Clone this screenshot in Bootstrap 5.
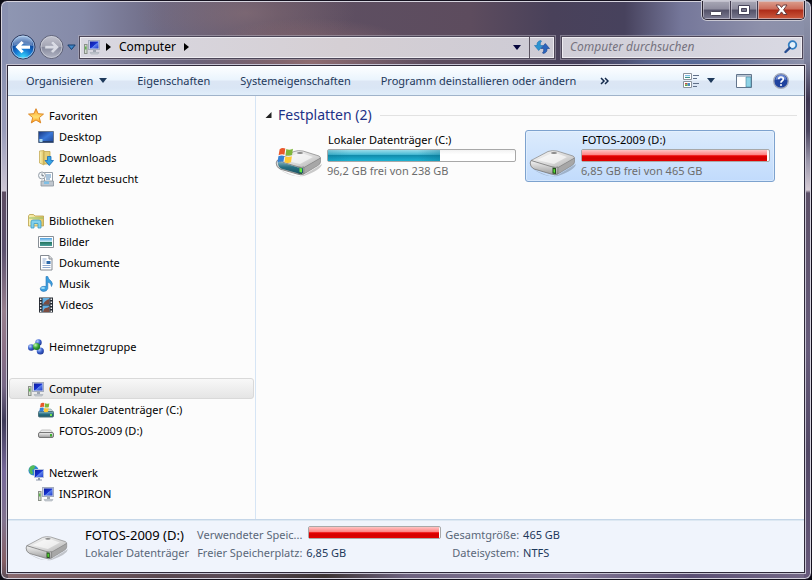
<!DOCTYPE html>
<html lang="de">
<head>
<meta charset="utf-8">
<meta name="viewport" content="width=device-width, initial-scale=1">
<title>Computer</title>
<link href="https://cdn.jsdelivr.net/npm/bootstrap@5.3.0/dist/css/bootstrap.min.css" rel="stylesheet">
<style>
  body { font-family: "Noto Sans", "Open Sans", sans-serif; font-size: 11px; line-height: 18px; color: #000; background: #0b0b14; }
  button, input { font: inherit; color: inherit; }
  .plain { border: 0; background: none; padding: 0; }
  .near { margin-left: 6px; }
  svg { display: block; flex: none; }
  .glass { border: 1px solid #15121f; border-radius: 7px; padding: 0 6px 6px; box-shadow: inset 0 0 0 1px #d5d3de;
    background:
      linear-gradient(180deg, #8990b0 0, #8990b0 60px, #9a9dbb 130px, #cdc6d4 190px, #5c4c62 191px, #5d526f 250px, #98808f 310px, #8b7187 350px, #776887 385px, #3e3a58 420px, #77699a 470px, #82748f 520px, #865f65 560px, #5b4d58) left / 7px 100% no-repeat,
      linear-gradient(180deg, #9197ad 0, #7c809b 60px, #3d3550 98px, #4b4560 130px, #9a96aa 160px, #d5cbd5 189px, #5c5068 192px, #665b7b 350px, #524866 450px, #67597c) right / 7px 100% no-repeat,
      linear-gradient(90deg, #8b6b70, #5a4850 20%, #5b4c58 28%, #3c3333 40%, #6e6380 50%, #857a98 70%, #5b4f74 85%, #756a88) bottom / 100% 8px no-repeat,
      radial-gradient(ellipse 120px 45px at 310px 62px, #a77b78aa 0, #a77b7800 100%),
      radial-gradient(ellipse 110px 40px at 245px 12px, #8b717799 0, #8b717700 100%),
      radial-gradient(ellipse 110px 34px at 690px 62px, #566997 0, #56699700 100%),
      linear-gradient(90deg, #8f97b3 0, #858aa8 10%, #6d6983 20%, #5e5063 34%, #5d4c5e 58%, #49415a 68%, #47425d 77%, #75779a 84%, #8e91ab 94%, #8a90a9);
  }
  .title-row { height: 34px; }
  .caption-group { height: 19px; width: 103px; border: 1px solid #28222f; border-top: 0; border-radius: 0 0 5px 5px; box-shadow: 0 0 0 1px #c9c8d3; overflow: hidden; background: linear-gradient(#a8a7b5 0, #8e8c9e 45%, #535168 50%, #7c7b92); }
  .caption-group button { border-right: 1px solid #403a4d; box-shadow: inset 0 0 0 1px #d3d1dc99; }
  .caption-group .close-btn { flex: 0 0 46px; border: 0; background: linear-gradient(#dca08f 0, #cc6c5a 45%, #ad2b18 50%, #cc5b3f); }
  .nav-row { height: 24px; padding: 0 2px 0 3px; }
  .orbs { width: 69px; gap: 3px; }
  .glass-field { height: 23px; border: 1px solid #4c4658; box-shadow: inset 0 0 0 1px #eeecf1, 0 0 0 1px #b3aebc88; background: linear-gradient(90deg, #d9d8e1, #d5cfd4 55%, #cdcbd5); }
  .refresh { width: 25px; height: 21px; border-left: 1px solid #5a5360; }
  .place { font-size: 12px; }
  .search-field { flex: 0 0 242px; margin-left: 6px; background: linear-gradient(90deg, #d0ced7, #d9d9e3); }
  .search-field input { background: transparent; border: 0; outline: 0; padding: 0 0 0 8px; min-width: 0; font-size: 12px; font-style: italic; }
  .search-field input::placeholder { color: #75727e; opacity: 1; }
  .client { border: 1px solid #2e2939; box-shadow: 0 0 0 1px #c5c2d1; background: #fcfcfc; margin-top: 6px; }
  .command-bar { height: 30px; padding: 0 15px 0 18px; border-bottom: 1px solid #a0b3ca; color: #1e395b; background: linear-gradient(#fdfeff 0, #eaf4fd 48%, #dce6f4 52%, #dae6f5 75%, #e1eefa); }
  .commands { gap: 30px; }
  .tools { gap: 21px; }
  .side { width: 248px; border-right: 1px solid #d6e5f5; padding: 9px 1px 0; }
  .tree-row { height: 21px; gap: 5px; padding-left: 18px; color: #000; text-decoration: none; white-space: nowrap; border: 1px solid transparent; border-radius: 3px; }
  .tree-row.sub { padding-left: 28px; }
  .tree-row.current { border-color: #d9d9d9; background: linear-gradient(#f8f8f8, #e5e5e5); }
  .tree-group { margin-bottom: 21px; }
  .files { padding: 9px 7px 0 9px; }
  .files h2 { font-size: 14px; line-height: 20px; color: #1e3287; }
  .head-line { height: 1px; background: #e2e2e2; }
  .tiles { gap: 4px; padding: 5px 0 0 6px; }
  .tile { width: 250px; height: 52px; padding: 0 4px 0 3px; gap: 4px; border: 1px solid transparent; border-radius: 3px; line-height: 16px; text-align: left; }
  .tile.chosen { border-color: #7da2ce; background: linear-gradient(#dcebfc, #c1dbfc); box-shadow: inset 0 0 0 1px #ebf4fd88; }
  .tile-name { padding: 1px 0 0 1px; }
  .muted-text { color: #6d6d6d; }
  .meter { height: 13px; border: 1px solid #a8a8a8; border-radius: 2px; background: linear-gradient(#f2f2f2, #fff 40%); }
  .tile .meter { margin: 1px 0; }
  .fill-blue { background: linear-gradient(90deg, #07698433, #19b6d400 20%, #19b6d400 80%, #07698455), linear-gradient(#9adcea 0, #4bbcd6 40%, #128cac 50%, #17a0c2 75%, #1fb3d2); }
  .fill-red { background: linear-gradient(#ffc4c4 0, #ff8080 45%, #e80000 52%, #d20000 75%, #e60000); }
  .details { border-top: 1px solid #c5d6e8; box-shadow: inset 0 1px #dde8f2; background: #f0f4fc; padding: 6px 0 10px 17px; color: #1e395b; }
  .details .cap { color: #5a6779; }
  .details .drive-name { font-size: 13px; color: #000; }
  .details .meter { width: 133px; margin: 0 0 5px 2px; }
  .facts { margin-left: 8px; white-space: nowrap; }
</style>
</head>
<body>
<svg width="0" height="0" class="position-absolute" aria-hidden="true">
  <defs>
    <linearGradient id="metal" x1="0" y1="0" x2="1" y2="1"><stop offset="0" stop-color="#fafafa"/><stop offset=".6" stop-color="#d5d5d5"/><stop offset="1" stop-color="#aaa"/></linearGradient>
    <linearGradient id="front" x1="0" y1="0" x2="0" y2="1"><stop offset="0" stop-color="#f4f4f4"/><stop offset="1" stop-color="#9b9b9b"/></linearGradient>
    <linearGradient id="screen" x1="0" y1="0" x2="1" y2="1"><stop offset="0" stop-color="#0a1c9c"/><stop offset=".5" stop-color="#1731cf"/><stop offset=".55" stop-color="#5d83ee"/><stop offset="1" stop-color="#1b38c8"/></linearGradient>
    <linearGradient id="teal" x1="0" y1="0" x2="0" y2="1"><stop offset="0" stop-color="#8db8c4"/><stop offset=".5" stop-color="#276f82"/><stop offset="1" stop-color="#1c5565"/></linearGradient>
    <radialGradient id="orb" cx=".5" cy=".95" r=".9"><stop offset="0" stop-color="#3ee0ff"/><stop offset=".4" stop-color="#1579d4"/><stop offset=".75" stop-color="#0b3f95"/><stop offset="1" stop-color="#6d9dd6"/></radialGradient>
    <linearGradient id="dim" x1="0" y1="0" x2="0" y2="1"><stop offset="0" stop-color="#c3c4cf"/><stop offset=".48" stop-color="#a4a5b3"/><stop offset=".52" stop-color="#878a9d"/><stop offset="1" stop-color="#b4b7c6"/></linearGradient>
    <linearGradient id="star" x1="0" y1="0" x2="0" y2="1"><stop offset="0" stop-color="#ff9f2b"/><stop offset=".6" stop-color="#ffe070"/><stop offset="1" stop-color="#ff9010"/></linearGradient>
    <linearGradient id="folder" x1="0" y1="0" x2="1" y2="0"><stop offset="0" stop-color="#fbf3b5"/><stop offset="1" stop-color="#dfc463"/></linearGradient>
    <linearGradient id="sky" x1="0" y1="0" x2="0" y2="1"><stop offset="0" stop-color="#4c9fe0"/><stop offset=".5" stop-color="#d6f1f5"/><stop offset=".55" stop-color="#277761"/><stop offset="1" stop-color="#4aa09d"/></linearGradient>
    <linearGradient id="desk" x1="0" y1="0" x2="1" y2="1"><stop offset="0" stop-color="#17357f"/><stop offset=".5" stop-color="#3a78d8"/><stop offset="1" stop-color="#1d4494"/></linearGradient>
    <radialGradient id="blueball" cx=".35" cy=".3" r=".8"><stop offset="0" stop-color="#b9d2ff"/><stop offset=".5" stop-color="#3c62cd"/><stop offset="1" stop-color="#172d86"/></radialGradient>
    <radialGradient id="greenball" cx=".35" cy=".3" r=".8"><stop offset="0" stop-color="#c4f7b2"/><stop offset=".5" stop-color="#39a736"/><stop offset="1" stop-color="#12611b"/></radialGradient>
    <symbol id="pc" viewBox="0 0 16 16">
      <rect x=".5" y="5.500" width="2.500" height="9" fill="#d3ddcf" stroke="#8a9188"/><path d="M1 7.500h1.500v3H1z" fill="#5eb64e"/>
      <rect x="4.500" y="1.500" width="11" height="9" fill="#ccd3e6" stroke="#a4acbd"/><rect x="6" y="2.500" width="8.500" height="7" fill="url(#screen)"/>
      <path d="M9 11h3v2H9z" fill="#9ea5b0"/><path d="M6 13.500h9l-1 1.500H7z" fill="#c9ced5" stroke="#9ba2ab" stroke-width=".5"/>
    </symbol>
    <symbol id="flag" viewBox="0 0 16 16">
      <path d="M2.500 2Q5 .3 7.800 1.500L7 7.200Q4.500 6.200 1.500 7.700z" fill="#e9582b"/><path d="M8.800 1.900Q11.500 3.300 15 1.700L14.200 7.500Q11 8.800 8 7.500z" fill="#7fb63b"/>
      <path d="M1.300 8.700Q4.200 7.300 6.900 8.400L6 14Q3.500 13 .5 14.500z" fill="#3682d5"/><path d="M7.900 8.700Q10.800 10.100 14 8.600L13.200 14.300Q10 15.600 7 14.300z" fill="#ffc933"/>
    </symbol>
    <symbol id="disk" viewBox="0 0 48 28">
      <path d="M4 20Q18 30 29 26L47 15Q46 21 29 27Q20 29 4 20z" fill="#0003"/>
      <path d="M2 11.500L19 2.500Q23 1 28 2L44 7Q46.500 8 44.500 10L29 19Q26 20.500 22 19z" fill="url(#metal)" stroke="#8f8f8f" stroke-width=".8"/>
      <path d="M2 11.500L22 17.500Q27 19 29 18V25Q26 26.500 22 25L5 20Q1 18 1.200 14z" fill="url(#front)" stroke="#777" stroke-width=".8"/>
      <path d="M29 18.500L45.500 9V13Q45.500 15 43 16.500L29 25z" fill="#a7a7a7" stroke="#7c7c7c" stroke-width=".6"/>
      <path d="M8 11L22 4.500Q25 3.500 28 4.500L38 8L25 15z" fill="#fff9"/><ellipse cx="25" cy="4" rx="3" ry="1" fill="#888"/>
      <path d="M23.500 18.500l3.500 .6v6l-3.500-.6z" fill="#234f1b"/><path d="M24.500 20l1.500.3v3.500l-1.500-.3z" fill="#57e334"/>
    </symbol>
    <symbol id="disk-small" viewBox="0 0 16 16">
      <path d="M3.500 6h9L15 9H1z" fill="#ededed" stroke="#aaa" stroke-width=".7"/><rect x=".5" y="8.500" width="15" height="5" rx="1.500" fill="url(#front)" stroke="#777"/><path d="M12 10h2v2.500h-2z" fill="#3eae31"/>
    </symbol>
  </defs>
</svg>

<div class="glass min-vh-100 d-flex flex-column">
  <header>
    <div class="title-row d-flex justify-content-end align-items-start">
      <div class="caption-group d-flex" role="group" aria-label="Fenster">
        <button class="plain flex-fill d-flex align-items-center justify-content-center" aria-label="Minimieren"><svg width="12" height="14"><rect x=".5" y="8.500" width="11" height="4" rx="1" fill="#fff" stroke="#4a4757"/></svg></button>
        <button class="plain flex-fill d-flex align-items-center justify-content-center" aria-label="Maximieren"><svg width="12" height="11"><path d="M.5.500h11v9H.5z" fill="#fff" stroke="#47445a"/><path d="M3.500 3.500h5v3h-5z" fill="#77758a" stroke="#47445a"/></svg></button>
        <button class="plain close-btn d-flex align-items-center justify-content-center" aria-label="Schließen"><svg width="13" height="12"><path d="M1 1h3.500l2 2.500L8.500 1H12L8.600 5.800l3.400 4.700H8.500l-2-2.600-2 2.600H1l3.400-4.700z" fill="#fff" stroke="#683c3f"/></svg></button>
      </div>
    </div>
    <div class="nav-row d-flex align-items-center">
      <div class="orbs d-flex align-items-center flex-shrink-0">
        <button class="plain" aria-label="Zurück"><svg width="26" height="26"><circle cx="13" cy="13" r="12" fill="url(#orb)" stroke="#333c5e"/><circle cx="13" cy="13" r="11" fill="none" stroke="#b8d2ee" stroke-opacity=".8"/><path d="M3 12a10 10 0 0 1 20 0Q13 9 3 12z" fill="#fff" opacity=".35"/><path d="M5.500 13l6-6 2.300 2-2.600 2.500H20v3.200h-8.800l2.600 2.500-2.300 2z" fill="#fff"/></svg></button>
        <button class="plain" aria-label="Vorwärts"><svg width="25" height="26"><circle cx="12.500" cy="13" r="11.500" fill="url(#dim)" stroke="#5d6076"/><circle cx="12.500" cy="13" r="10.500" fill="none" stroke="#d3d5df" stroke-opacity=".7"/><path d="M20 13l-6-6-2.300 2 2.600 2.500H6v3.200h8.300l-2.600 2.500 2.300 2z" fill="#d9dbe4" stroke="#9da0b0" stroke-width=".5"/></svg></button>
        <button class="plain" aria-label="Zuletzt besuchte Seiten"><svg width="9" height="7"><path d="M.8 1h7.400L4.500 5.500z" fill="#3e86c8" stroke="#173e70"/></svg></button>
      </div>
      <div class="glass-field flex-grow-1 d-flex align-items-center ps-1">
        <svg width="16" height="16"><use href="#pc"/></svg>
        <svg class="near" width="5" height="8"><path d="M0 0l5 4-5 4z" fill="#000"/></svg>
        <button class="plain place ms-1 px-1">Computer</button>
        <svg class="ms-1" width="5" height="8"><path d="M0 0l5 4-5 4z" fill="#000"/></svg>
        <button class="plain near ms-auto me-1 pe-1" aria-label="Adressen"><svg width="8" height="5"><path d="M0 0h8L4 5z" fill="#06063d"/></svg></button>
        <button class="plain refresh d-flex align-items-center justify-content-center" aria-label="Aktualisieren"><svg width="16" height="14"><path d="M6.500 .5Q2.500 1.500 3 5.500H.5L4.700 10.500 9 5.500H6.300Q5.800 2.500 7.500 1z" fill="#2c94d0" stroke="#1d6fb3" stroke-width=".6"/><path d="M9.500 13.500q4-1 3.500-5h2.500L11.300 3.500 7 8.500h2.700q.5 3-1.200 4.500z" fill="#2c65bd" stroke="#183f8d" stroke-width=".6"/></svg></button>
      </div>
      <div class="glass-field search-field d-flex align-items-center">
        <input class="flex-grow-1" type="text" placeholder="Computer durchsuchen" aria-label="Computer durchsuchen">
        <svg class="me-1" width="14" height="14"><circle cx="8.500" cy="5" r="3.800" fill="#e5f2fb" stroke="#347fc2" stroke-width="1.800"/><path d="M5.700 7.800L1.500 12" stroke="#274d91" stroke-width="2.400" stroke-linecap="round"/></svg>
      </div>
    </div>
  </header>

  <div class="client flex-grow-1 d-flex flex-column">
    <div class="command-bar d-flex align-items-center" role="toolbar" aria-label="Befehle">
      <div class="commands d-flex align-items-center text-nowrap">
        <button class="plain d-flex align-items-center">Organisieren<svg class="near" width="8" height="5"><path d="M0 0h8L4 5z" fill="#1e395b"/></svg></button>
        <button class="plain">Eigenschaften</button>
        <button class="plain">Systemeigenschaften</button>
        <button class="plain">Programm deinstallieren oder ändern</button>
      </div>
      <button class="plain ms-4" aria-label="Weitere Befehle"><svg width="9" height="8"><path d="M1 1l3 3-3 3M5 1l3 3-3 3" fill="none" stroke="#13294a" stroke-width="1.500"/></svg></button>
      <div class="tools d-flex align-items-center ms-auto">
        <div class="d-flex align-items-center gap-2">
          <button class="plain" aria-label="Ansicht"><svg width="16" height="16"><path d="M.5.500h8v6h-8zM.5 8.500h8v6h-8z" fill="#fff" stroke="#8a929c"/><path d="M2 2h5v3H2z" fill="url(#sky)"/><path d="M2 10h2.500v1.500H2z" fill="#c84b3d"/><path d="M4.500 10H7v3H4.500z" fill="#4b89bf"/><path d="M2 11.500h2.500V13H2z" fill="#5aa940"/><path d="M10 2.500h6M10 5.500h4M10 10.500h6M10 13.500h4" stroke="#607089"/></svg></button>
          <button class="plain" aria-label="Weitere Optionen"><svg width="8" height="5"><path d="M0 0h8L4 5z" fill="#1e395b"/></svg></button>
        </div>
        <button class="plain" aria-label="Vorschaufenster"><svg width="16" height="14"><path d="M.5.500h15v13H.5z" fill="#fff" stroke="#63758c"/><path d="M1 1h14v2H1z" fill="#b8c5d3"/><path d="M10 3h5v10h-5z" fill="#8fd3e6" stroke="#4584a0" stroke-width=".6"/></svg></button>
        <button class="plain" aria-label="Hilfe"><svg width="16" height="16"><circle cx="8" cy="8" r="7.300" fill="#1f429f" stroke="#a2a9ba" stroke-width="1.400"/><path d="M2.500 7a5.500 5.500 0 0 1 11 0Q8 5 2.500 7z" fill="#86a3e5" opacity=".7"/><path d="M5.700 6.300Q5.700 4 8 4t2.300 2Q10.300 7.200 9 8 8 8.700 8 9.700" fill="none" stroke="#fff" stroke-width="1.700"/><circle cx="8" cy="12" r="1" fill="#fff"/></svg></button>
      </div>
    </div>

    <div class="d-flex flex-grow-1">
      <nav class="side flex-shrink-0" aria-label="Navigationsbereich">
        <div class="tree-group">
          <a href="#" class="tree-row d-flex align-items-center"><svg width="16" height="16"><path d="M8 .7l2.100 5 5.400.4-4.200 3.500 1.400 5.300L8 12l-4.700 2.900 1.400-5.300L.5 6.100l5.400-.4z" fill="url(#star)" stroke="#d9811c" stroke-width=".9"/></svg>Favoriten</a>
          <a href="#" class="tree-row sub d-flex align-items-center"><svg width="16" height="16"><path d="M.5 2.500h15v11H.5z" fill="url(#desk)" stroke="#67778e"/><path d="M1 12h14v1.500H1z" fill="#24406e"/><path d="M1.500 10h3v3h-3z" fill="#a9d8ee"/></svg>Desktop</a>
          <a href="#" class="tree-row sub d-flex align-items-center"><svg width="16" height="16"><path d="M1.500 1l4.500-.5V15l-4.500-2z" fill="url(#folder)" stroke="#c5ab58" stroke-width=".8"/><path d="M6 1.500h6V14H6z" fill="#e5cf78" stroke="#bfa44d" stroke-width=".8"/><path d="M9.500 6.500h3.500v4h2.500L11.300 15.500 7 10.500h2.500z" fill="#37a5e5" stroke="#1769b6" stroke-width=".8"/></svg>Downloads</a>
          <a href="#" class="tree-row sub d-flex align-items-center"><svg width="16" height="16"><path d="M6.500 1.500h8v10h-8z" fill="#fff" stroke="#97a0aa"/><path d="M8 4h5M8 6h5M8 8h4" stroke="#5088b8"/><path d="M3 10h12.500v5H3z" fill="#bfc6ce" stroke="#8b949d" stroke-width=".8"/><path d="M6 10.500h5v2.500H6z" fill="#7fbfe5"/><circle cx="4" cy="4.500" r="3.500" fill="#f1f5f8" stroke="#979fa8"/><path d="M4 2.500v2.300h2" fill="none" stroke="#56616c" stroke-width=".8"/></svg>Zuletzt besucht</a>
        </div>
        <div class="tree-group">
          <a href="#" class="tree-row d-flex align-items-center"><svg width="16" height="16"><path d="M.5 3l1-1.500h4L7 3h8.500v10H.5z" fill="url(#folder)" stroke="#b99f4a" stroke-width=".8"/><path d="M1 5h14" stroke="#8fbf66"/><path d="M3 15V9Q3 7 5 7h6q2 0 2 2v6h-3v-4.500H6V15z" fill="#83d0ec" stroke="#3a9cc8" stroke-width=".8"/></svg>Bibliotheken</a>
          <a href="#" class="tree-row sub d-flex align-items-center"><svg width="16" height="16"><path d="M.5 2.500h15v11H.5z" fill="#fff" stroke="#888f96"/><path d="M2 4h12v8H2z" fill="url(#sky)"/></svg>Bilder</a>
          <a href="#" class="tree-row sub d-flex align-items-center"><svg width="16" height="16"><path d="M2.500.500h8.500l3 3V15H2.500z" fill="#fff" stroke="#858b93"/><path d="M11 .5V4h3" fill="#ddd" stroke="#858b93"/><path d="M4.500 4h4M4.500 6h3M4.500 8h3M4.500 10.500h8M4.500 12.500h8" stroke="#90a9cf"/><path d="M8.500 6h4v3h-4z" fill="#2c68a9"/></svg>Dokumente</a>
          <a href="#" class="tree-row sub d-flex align-items-center"><svg width="16" height="16"><path d="M8 .5h1.800Q10 3 13 5q2.500 2.500.5 5.500Q13.500 7 9.800 6v6.500Q9 15.500 5.500 15.500 2 15 2.300 12.500 3 9.800 8 10.500z" fill="#3a9fdf" stroke="#2373b8" stroke-width=".6"/><ellipse cx="5" cy="12" rx="2" ry="1" fill="#9ddcf7"/></svg>Musik</a>
          <a href="#" class="tree-row sub d-flex align-items-center"><svg width="16" height="16"><path d="M1 .5h14v15H1z" fill="#252a32"/><path d="M4.500 1h7v6.500h-7zM4.500 8.500h7V15h-7z" fill="#62aee2"/><path d="M5 7.500Q7 3 11.500 2v5.500zM5 15q1-4 3-4t3.500-2V15z" fill="#7b4d42"/><path d="M2.700 1.500v14M13.300 1.500v14" stroke="#eee" stroke-width="1.500" stroke-dasharray="1.500 1.500"/></svg>Videos</a>
        </div>
        <div class="tree-group">
          <a href="#" class="tree-row d-flex align-items-center"><svg width="16" height="16"><circle cx="10.500" cy="3.500" r="3.200" fill="url(#blueball)"/><circle cx="3.200" cy="8.500" r="3.200" fill="url(#blueball)"/><circle cx="12.300" cy="12" r="3.600" fill="url(#blueball)"/><circle cx="8.500" cy="7.500" r="3.600" fill="url(#greenball)"/></svg>Heimnetzgruppe</a>
        </div>
        <div class="tree-group">
          <a href="#" class="tree-row current d-flex align-items-center" aria-current="page"><svg width="16" height="16"><use href="#pc"/></svg>Computer</a>
          <a href="#" class="tree-row sub d-flex align-items-center"><svg width="16" height="16"><path d="M3 7h10l2.500 3H.5z" fill="#c9d7db" stroke="#829ca3" stroke-width=".6"/><rect x=".5" y="9.500" width="15" height="5.500" rx="1" fill="url(#teal)" stroke="#4d717b"/><path d="M12 12h2v2h-2z" fill="#6ee34c"/><use href="#flag" x="1" y="0" width="11" height="11"/></svg>Lokaler Datenträger (C:)</a>
          <a href="#" class="tree-row sub d-flex align-items-center"><svg width="16" height="16"><use href="#disk-small" y="1"/></svg>FOTOS-2009 (D:)</a>
        </div>
        <div>
          <a href="#" class="tree-row d-flex align-items-center"><svg width="16" height="16"><circle cx="5.500" cy="5.500" r="5" fill="#2c86d2"/><path d="M2 2q3-3 5-1Q7 4 4 5l1 3q-1 2-2 1.500Q0 6 2 2z" fill="#55bd58"/><path d="M6.500 4.500h9v8h-9z" fill="url(#screen)" stroke="#b7c3dc"/><path d="M10 13h2v1.500h2v1H8v-1h2z" fill="#8c96aa"/></svg>Netzwerk</a>
          <a href="#" class="tree-row sub d-flex align-items-center"><svg width="16" height="16"><use href="#pc"/></svg>INSPIRON</a>
        </div>
      </nav>

      <main class="files flex-grow-1">
        <div class="d-flex align-items-center">
          <svg width="7" height="6"><path d="M6.500 0v6H.5z" fill="#222"/></svg>
          <h2 class="near mb-0 fw-normal">Festplatten (2)</h2>
          <div class="head-line flex-grow-1 ms-2"></div>
        </div>
        <div class="tiles d-flex flex-wrap">
          <button class="plain tile d-flex">
            <svg class="align-self-end mb-1" width="48" height="36"><use href="#disk" y="8" width="48" height="28"/><path d="M3 20l20 6.500q3 1 5 .5v5q-3 1-6 0L6 27.500Q2 25 3 20z" fill="url(#teal)"/><path d="M24.500 27l2.500.5v4l-2.500-.6z" fill="#65ed3b"/><use href="#flag" x="2" y="6" width="17" height="17"/></svg>
            <span class="flex-grow-1"><span class="tile-name d-block">Lokaler Datenträger (C:)</span>
              <span class="meter d-flex bg-white"><span class="fill-blue" style="width:60%"></span></span>
              <span class="muted-text d-block">96,2 GB frei von 238 GB</span></span>
          </button>
          <button class="plain tile chosen d-flex" aria-pressed="true">
            <svg class="align-self-end mb-1" width="48" height="28"><use href="#disk"/></svg>
            <span class="flex-grow-1"><span class="tile-name d-block">FOTOS-2009 (D:)</span>
              <span class="meter d-flex"><span class="fill-red" style="width:99%"></span></span>
              <span class="muted-text d-block">6,85 GB frei von 465 GB</span></span>
          </button>
        </div>
      </main>
    </div>

    <footer class="details d-flex">
      <svg class="mt-2" width="44" height="28"><use href="#disk"/></svg>
      <div class="ms-3 text-nowrap"><div class="drive-name">FOTOS-2009 (D:)</div><div class="cap">Lokaler Datenträger</div></div>
      <div class="facts cap text-end"><div>Verwendeter Speic...</div><div>Freier Speicherplatz:</div></div>
      <div class="ms-1 flex-shrink-0"><div class="meter d-flex"><div class="fill-red" style="width:99%"></div></div><div>6,85 GB</div></div>
      <div class="ms-1 cap text-end text-nowrap"><div>Gesamtgröße:</div><div>Dateisystem:</div></div>
      <div class="ms-1 text-nowrap"><div>465 GB</div><div>NTFS</div></div>
    </footer>
  </div>
</div>
<script src="https://cdn.jsdelivr.net/npm/bootstrap@5.3.0/dist/js/bootstrap.bundle.min.js"></script>
</body>
</html>
